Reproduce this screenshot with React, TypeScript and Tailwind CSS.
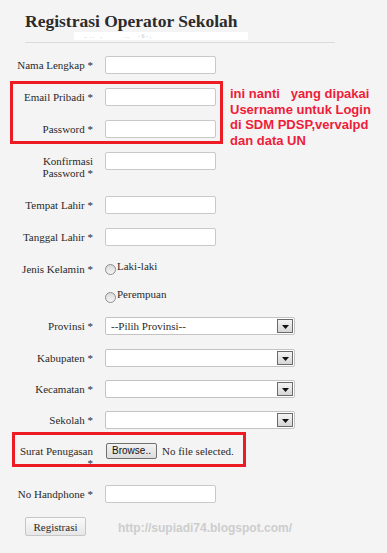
import type { ReactNode } from 'react';

function TextBox() {
  return <div className="h-[18px] w-[111px] rounded-[2px] border border-[#c9c9c9] bg-white" />;
}

function SelectBox({ value }: { value?: string }) {
  return (
    <div className="flex h-[18px] w-[190px] items-center rounded-[2px] border border-[#c3c3c3] bg-white">
      <span className="pl-[5px] text-[11px] leading-[12px] text-[#2a2a2a]">{value}</span>
      <div className="ml-auto mr-[1px] flex h-[14px] w-[16px] items-end justify-center border border-[#6a6a6a] bg-gradient-to-b from-[#f4f4f4] to-[#d6d6d6] pb-[3px]">
        <svg width="7" height="4" viewBox="0 0 7 4">
          <path d="M0 0h7L3.5 4z" fill="#111" />
        </svg>
      </div>
    </div>
  );
}

function Radio({ label }: { label: string }) {
  return (
    <div className="flex items-start">
      <span className="mt-[4px] h-[11px] w-[11px] rounded-full border border-[#8e8e8e] bg-gradient-to-b from-[#d9d9d9] to-[#f6f6f6]" />
      <span className="ml-[1px] text-[11px] leading-[12px] text-[#2a2a2a]">{label}</span>
    </div>
  );
}

function Row({ label, className, children }: { label?: ReactNode; className: string; children: ReactNode }) {
  return (
    <div className={`flex h-[18px] items-start ${className}`}>
      <div className="w-[95px] shrink-0 pl-[15px] pr-[2px] pt-[3px] text-right text-[11px] leading-[12px] text-[#2a2a2a]">
        {label}
      </div>
      <div className="ml-[10px]">{children}</div>
    </div>
  );
}

export default function App() {
  return (
    <div className="relative min-h-[553px] w-full bg-[#f4f4f4] font-['Liberation_Serif',serif]">
      <div className="pl-[25px] pt-[11px]">
        <h1 className="text-[17.5px] font-bold leading-[20px] text-[#2b2b2b]">Registrasi Operator Sekolah</h1>
        <div className="h-[10px]">
          <div className="ml-[49px] mt-[1px] h-[8px] w-[174px] bg-white pl-[10px] pt-[1px] text-[6px] leading-[7px] text-[#c4c4c4]">
            ..&nbsp;&nbsp;. .&nbsp;&nbsp;&nbsp;&nbsp;,&nbsp;&nbsp;&nbsp;&nbsp;&nbsp;&nbsp;&nbsp;&nbsp;&nbsp;&nbsp;&nbsp;&nbsp;&nbsp;&nbsp;. ..&nbsp;&nbsp;&nbsp;&nbsp;&nbsp;&nbsp;- 6 - ,
          </div>
        </div>
        <div className="w-[310px] border-b border-[#dcdcdc]" />
      </div>

      <Row label="Nama Lengkap *" className="mt-[13px]">
        <TextBox />
      </Row>
      <Row label="Email Pribadi *" className="mt-[14px]">
        <TextBox />
      </Row>
      <Row label="Password *" className="mt-[14px]">
        <TextBox />
      </Row>
      <Row label="Konfirmasi Password *" className="mt-[14px]">
        <TextBox />
      </Row>
      <Row label="Tempat Lahir *" className="mt-[26px]">
        <TextBox />
      </Row>
      <Row label="Tanggal Lahir *" className="mt-[14px]">
        <TextBox />
      </Row>
      <Row label="Jenis Kelamin *" className="mt-[14px]">
        <Radio label="Laki-laki" />
      </Row>
      <Row className="mt-[10px]">
        <Radio label="Perempuan" />
      </Row>
      <Row label="Provinsi *" className="mt-[11px]">
        <SelectBox value="--Pilih Provinsi--" />
      </Row>
      <Row label="Kabupaten *" className="mt-[14px]">
        <SelectBox />
      </Row>
      <Row label="Kecamatan *" className="mt-[13px]">
        <SelectBox />
      </Row>
      <Row label="Sekolah *" className="mt-[13px]">
        <SelectBox />
      </Row>
      <Row label="Surat Penugasan *" className="mt-[13px]">
        <div className="flex items-center pt-[1px]">
          <button className="ml-[1px] h-[16px] w-[51px] rounded-[2px] border border-[#707070] bg-gradient-to-b from-[#f2f2f2] to-[#dcdcdc] font-['Liberation_Sans',sans-serif] text-[10px] leading-[14px] text-[#111]">
            Browse..
          </button>
          <span className="ml-[5px] text-[11px] leading-[12px] text-[#2a2a2a]">No file selected.</span>
        </div>
      </Row>
      <Row label="No Handphone *" className="mt-[25px]">
        <TextBox />
      </Row>

      <div className="mt-[14px] flex items-start pl-[25px]">
        <button className="h-[19px] w-[61px] rounded-[2px] border border-[#c6c6c6] bg-gradient-to-b from-[#fafafa] to-[#e6e6e6] text-[11px] leading-[14px] text-[#2a2a2a]">
          Registrasi
        </button>
        <span className="ml-[32px] pt-[4px] font-['Liberation_Sans',sans-serif] text-[12px] font-bold leading-[14px] text-[#cdcdcd]">
          http://supiadi74.blogspot.com/
        </span>
      </div>

      <div className="pointer-events-none absolute left-[10px] top-[81px] h-[63px] w-[213px] border-[3px] border-[#ed1c24]" />
      <div className="pointer-events-none absolute left-[12px] top-[432px] h-[35px] w-[234px] border-[3px] border-[#ed1c24]" />
      <p className="absolute left-[230px] top-[86px] whitespace-pre font-['Liberation_Sans',sans-serif] text-[13px] font-bold leading-[15.5px] text-[#ee1d3a]">
        {'ini nanti   yang dipakai\nUsername untuk Login\ndi SDM PDSP,vervalpd\ndan data UN'}
      </p>
    </div>
  );
}
